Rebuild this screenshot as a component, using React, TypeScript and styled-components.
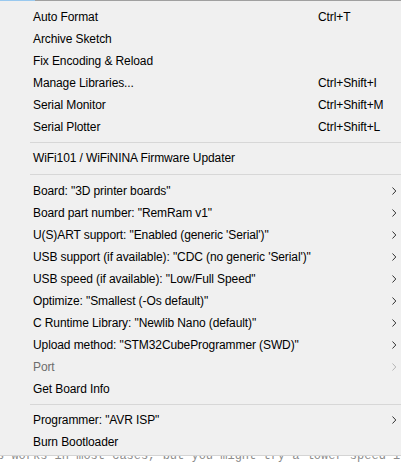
import React from "react";
import styled, { createGlobalStyle } from "styled-components";

const GlobalStyle = createGlobalStyle`
  html, body {
    margin: 0;
    padding: 0;
    background: #ffffff;
  }
`;

const Page = styled.div`
  width: 401px;
  height: 465px;
  overflow: hidden;
  display: flex;
  flex-direction: column;
  font-family: "Liberation Sans", Arial, sans-serif;
  font-size: 12px;
  color: #000;
`;

const Menu = styled.div`
  background: #f0f0f0;
  border-bottom: 1px solid #d4d4d4;
  display: flex;
  flex-direction: column;
`;

const TopEdge = styled.div`
  display: flex;
  height: 1px;
`;

const TabMark = styled.div`
  width: 35px;
  background: #99c9ef;
`;

const EdgeRest = styled.div`
  flex: 1;
  background: #a0a0a0;
`;

const List = styled.div`
  padding: 5px 0 2px;
  display: flex;
  flex-direction: column;
`;

const Item = styled.div<{ $disabled?: boolean }>`
  height: 22px;
  display: grid;
  grid-template-columns: 33px 285px 1fr 9px;
  align-items: center;
  white-space: nowrap;
  letter-spacing: -0.1px;
  color: ${(p) => (p.$disabled ? "#6d6d6d" : "#000")};
`;

const Label = styled.span`
  grid-column: 2;
  overflow: visible;
`;

const Shortcut = styled.span`
  grid-column: 3;
`;

const Arrow = styled.span<{ $disabled?: boolean }>`
  grid-column: 4;
  display: flex;
  align-items: center;
  color: ${(p) => (p.$disabled ? "#b5b5b5" : "#333")};
`;

const Separator = styled.div<{ $h: number }>`
  height: ${(p) => p.$h}px;
  display: flex;
  align-items: center;
  padding-left: 30px;

  &::after {
    content: "";
    flex: 1;
    height: 1px;
    background: #d7d7d7;
  }
`;

const Editor = styled.div`
  flex: 1;
  overflow: hidden;
  background: #ffffff;
`;

const CodeLine = styled.div`
  margin-top: -8px;
  margin-left: -3px;
  font-family: "Liberation Mono", monospace;
  font-size: 12px;
  line-height: 16px;
  color: #8c8c8c;
  white-space: pre;
`;

const Chevron = () => (
  <svg width="5" height="8" viewBox="0 0 5 8">
    <polyline points="0.5,0.5 3.8,4 0.5,7.5" fill="none" stroke="currentColor" strokeWidth="1" />
  </svg>
);

type Entry =
  | { kind: "item"; label: string; shortcut?: string; sub?: boolean; disabled?: boolean }
  | { kind: "sep"; h: number };

const entries: Entry[] = [
  { kind: "item", label: "Auto Format", shortcut: "Ctrl+T" },
  { kind: "item", label: "Archive Sketch" },
  { kind: "item", label: "Fix Encoding & Reload" },
  { kind: "item", label: "Manage Libraries...", shortcut: "Ctrl+Shift+I" },
  { kind: "item", label: "Serial Monitor", shortcut: "Ctrl+Shift+M" },
  { kind: "item", label: "Serial Plotter", shortcut: "Ctrl+Shift+L" },
  { kind: "sep", h: 9 },
  { kind: "item", label: "WiFi101 / WiFiNINA Firmware Updater" },
  { kind: "sep", h: 11 },
  { kind: "item", label: 'Board: "3D printer boards"', sub: true },
  { kind: "item", label: 'Board part number: "RemRam v1"', sub: true },
  { kind: "item", label: "U(S)ART support: \"Enabled (generic 'Serial')\"", sub: true },
  { kind: "item", label: "USB support (if available): \"CDC (no generic 'Serial')\"", sub: true },
  { kind: "item", label: 'USB speed (if available): "Low/Full Speed"', sub: true },
  { kind: "item", label: 'Optimize: "Smallest (-Os default)"', sub: true },
  { kind: "item", label: 'C Runtime Library: "Newlib Nano (default)"', sub: true },
  { kind: "item", label: 'Upload method: "STM32CubeProgrammer (SWD)"', sub: true },
  { kind: "item", label: "Port", sub: true, disabled: true },
  { kind: "item", label: "Get Board Info" },
  { kind: "sep", h: 9 },
  { kind: "item", label: 'Programmer: "AVR ISP"', sub: true },
  { kind: "item", label: "Burn Bootloader" },
];

export default function App() {
  return (
    <>
      <GlobalStyle />
      <Page>
        <Menu>
          <TopEdge>
            <TabMark />
            <EdgeRest />
          </TopEdge>
          <List>
            {entries.map((e, i) =>
              e.kind === "sep" ? (
                <Separator key={i} $h={e.h} />
              ) : (
                <Item key={i} $disabled={e.disabled}>
                  <Label>{e.label}</Label>
                  {e.shortcut && <Shortcut>{e.shortcut}</Shortcut>}
                  {e.sub && (
                    <Arrow $disabled={e.disabled}>
                      <Chevron />
                    </Arrow>
                  )}
                </Item>
              )
            )}
          </List>
        </Menu>
        <Editor>
          <CodeLine>s works in most cases, but you might try a lower speed if</CodeLine>
        </Editor>
      </Page>
    </>
  );
}
